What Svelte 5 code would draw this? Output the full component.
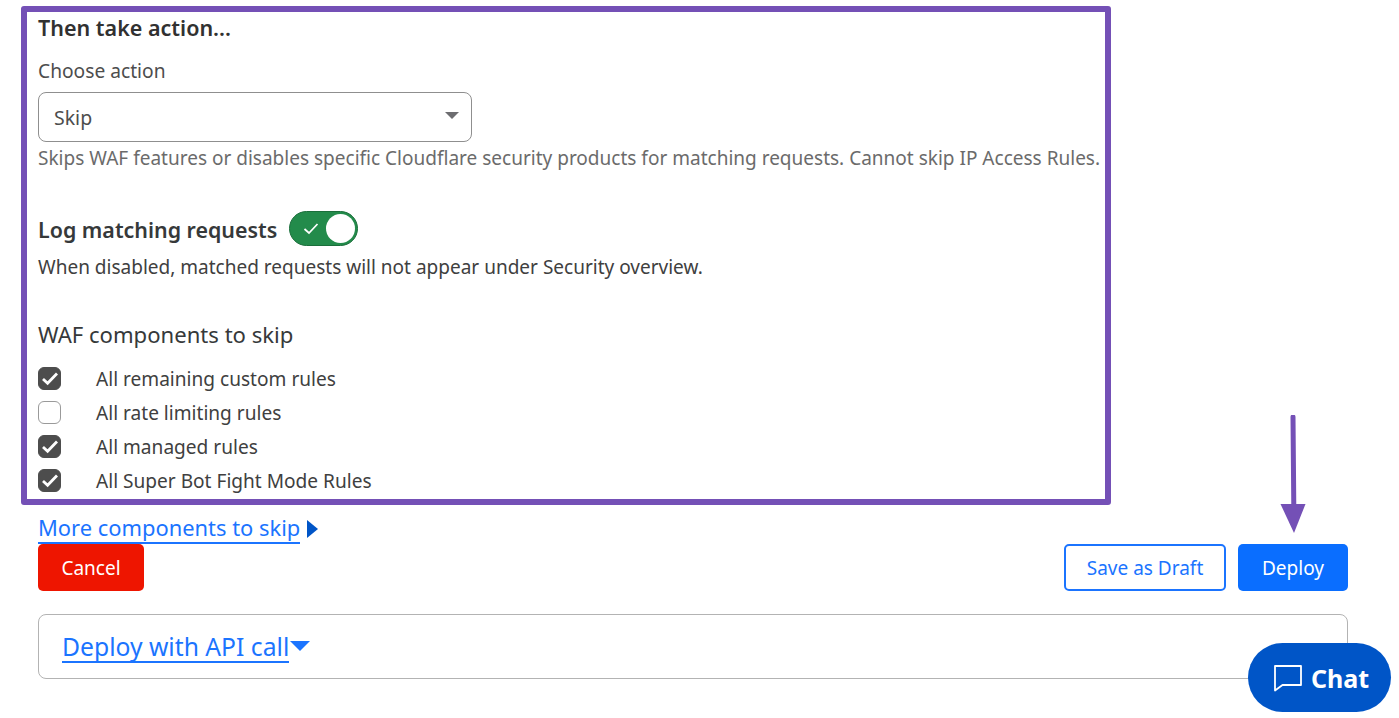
<script>
	const components = [
		{ label: 'All remaining custom rules', checked: true },
		{ label: 'All rate limiting rules', checked: false },
		{ label: 'All managed rules', checked: true },
		{ label: 'All Super Bot Fight Mode Rules', checked: true }
	];
</script>

<div class="page">
	<section class="frame">
		<h2>Then take action...</h2>
		<div class="field-label">Choose action</div>
		<div class="select">
			<span>Skip</span>
			<i class="caret"></i>
		</div>
		<p class="hint">Skips WAF features or disables specific Cloudflare security products for matching requests. Cannot skip IP Access Rules.</p>

		<div class="log-row">
			<span class="log-label">Log matching requests</span>
			<span class="toggle">
				<svg width="18" height="13" viewBox="0 0 18 13"><path d="M2.5 7 L7 11 L15.5 2" fill="none" stroke="#fff" stroke-width="1.7"/></svg>
				<i class="knob"></i>
			</span>
		</div>
		<p class="log-hint">When disabled, matched requests will not appear under Security overview.</p>

		<h3>WAF components to skip</h3>
		<ul class="checks">
			{#each components as c}
				<li>
					<span class="box" class:checked={c.checked}>
						{#if c.checked}
							<svg width="18" height="15" viewBox="0 0 18 15"><path d="M2 8 L6.6 12.2 L16 2.6" fill="none" stroke="#fff" stroke-width="2.8"/></svg>
						{/if}
					</span>
					<span class="check-label">{c.label}</span>
				</li>
			{/each}
		</ul>
	</section>

	<div class="more"><a href="#more">More components to skip</a><i class="tri-right"></i></div>

	<div class="actions">
		<button class="btn cancel">Cancel</button>
		<div class="right">
			<button class="btn draft">Save as Draft</button>
			<button class="btn deploy">Deploy</button>
		</div>
	</div>

	<div class="api-panel">
		<a href="#api">Deploy with API call</a><i class="tri-down"></i>
	</div>

	<svg class="arrow" width="40" height="120" viewBox="0 0 40 120">
		<path d="M20 2 L20.8 92" stroke="#7450b6" stroke-width="5" stroke-linecap="round" fill="none"/>
		<path d="M7.5 89 L32.5 89 L21 118 Z" fill="#7450b6"/>
	</svg>

	<button class="chat">
		<svg width="30" height="28" viewBox="0 0 30 28"><path d="M2 2 H28 V21 H9.5 L2 26.5 Z" fill="none" stroke="#fff" stroke-width="1.8" stroke-linejoin="round"/></svg>
		<span>Chat</span>
	</button>
</div>

<style>
	:global(body) {
		margin: 0;
		background: #fff;
	}

	.page {
		position: relative;
		width: 1399px;
		height: 718px;
		overflow: hidden;
		box-sizing: border-box;
		padding: 6px 51px 0 38px;
		font-family: "Noto Sans", "Open Sans", sans-serif;
		color: #36393a;
	}

	.frame {
		margin-left: -17px;
		width: 1090px;
		height: 499px;
		box-sizing: border-box;
		border: 6px solid #7450b6;
		border-radius: 3px;
		padding: 0 0 0 11px;
	}

	h2 {
		margin: 0;
		height: 32px;
		font-size: 21.5px;
		line-height: 32px;
		font-weight: 600;
		color: #313131;
		white-space: nowrap;
	}

	.field-label {
		margin-top: 13px;
		height: 28px;
		font-size: 19.2px;
		line-height: 28px;
		color: #4d4d4d;
	}

	.select {
		margin-top: 7px;
		width: 434px;
		height: 50px;
		box-sizing: border-box;
		border: 1px solid #8f8f8f;
		border-radius: 8px;
		display: flex;
		align-items: center;
		justify-content: space-between;
		padding: 0 12px 0 15px;
		font-size: 19.5px;
		color: #4d4d4d;
	}

	.caret {
		width: 0;
		height: 0;
		border-left: 7px solid transparent;
		border-right: 7px solid transparent;
		border-top: 7px solid #6d6d70;
		margin-top: -3px;
	}

	.hint {
		margin: 2px 0 0;
		height: 28px;
		font-size: 19.03px;
		line-height: 28px;
		color: #6b6b6b;
		white-space: nowrap;
	}

	.log-row {
		margin-top: 39px;
		height: 35px;
		display: flex;
		align-items: center;
		gap: 12px;
	}

	.log-label {
		padding-top: 2px;
		font-size: 21.4px;
		font-weight: 600;
		color: #36393a;
		white-space: nowrap;
	}

	.toggle {
		width: 69px;
		height: 35px;
		box-sizing: border-box;
		border-radius: 18px;
		background: #238b4b;
		border: 1px solid #1b6f3b;
		display: flex;
		align-items: center;
		justify-content: space-between;
		padding: 0 2px 0 12px;
	}

	.knob {
		width: 29px;
		height: 29px;
		border-radius: 50%;
		background: #fff;
	}

	.log-hint {
		margin: 7px 0 0;
		height: 28px;
		font-size: 19.03px;
		line-height: 28px;
		color: #404040;
		white-space: nowrap;
	}

	h3 {
		margin: 38px 0 0;
		height: 32px;
		font-size: 22.1px;
		line-height: 30px;
		font-weight: 400;
		color: #36393a;
	}

	.checks {
		list-style: none;
		margin: 10px 0 0;
		padding: 0;
	}

	.checks li {
		height: 34px;
		display: flex;
		align-items: center;
		font-size: 19.1px;
		color: #404040;
	}

	.check-label {
		padding-top: 2px;
	}

	.box {
		flex: none;
		width: 23px;
		height: 23px;
		box-sizing: border-box;
		margin-right: 35px;
		border: 1px solid #9a9a9a;
		border-radius: 6px;
		background: #fff;
		display: flex;
		align-items: center;
		justify-content: center;
	}

	.box.checked {
		background: #4d4d4d;
		border-color: #4d4d4d;
	}

	.more {
		margin-top: 8px;
		height: 31px;
		display: flex;
		align-items: center;
		font-size: 21.9px;
		line-height: 31px;
	}

	a {
		color: #1b74ff;
		text-decoration: none;
		border-bottom: 2px solid #1b74ff;
		line-height: 28px;
		white-space: nowrap;
	}

	.tri-right {
		margin-left: 7px;
		width: 0;
		height: 0;
		border-top: 9px solid transparent;
		border-bottom: 9px solid transparent;
		border-left: 11px solid #0055c7;
	}

	.actions {
		height: 47px;
		display: flex;
		justify-content: space-between;
	}

	.right {
		display: flex;
		gap: 12px;
	}

	.btn {
		height: 47px;
		box-sizing: border-box;
		border-radius: 5px;
		font: inherit;
		font-size: 19px;
		padding: 0;
	}

	.cancel {
		width: 106px;
		background: #ee1500;
		border: 0;
		color: #fff;
	}

	.draft {
		width: 162px;
		background: #fff;
		border: 2px solid #1b74ff;
		color: #1b74ff;
	}

	.deploy {
		width: 110px;
		background: #0a6eff;
		border: 0;
		color: #fff;
	}

	.api-panel {
		margin-top: 23px;
		height: 65px;
		box-sizing: border-box;
		border: 1px solid #b3b3b3;
		border-radius: 8px;
		padding: 3px 0 0 23px;
		display: flex;
		align-items: center;
		font-size: 24.7px;
	}

	.tri-down {
		margin-left: 1px;
		width: 0;
		height: 0;
		border-left: 10px solid transparent;
		border-right: 10px solid transparent;
		border-top: 10px solid #1b74ff;
		margin-top: -4px;
	}

	.arrow {
		position: absolute;
		left: 1273px;
		top: 415px;
	}

	.chat {
		position: absolute;
		left: 1248px;
		top: 643px;
		width: 143px;
		height: 69px;
		border: 0;
		border-radius: 35px;
		background: #0055c7;
		color: #fff;
		display: flex;
		align-items: center;
		justify-content: center;
		gap: 8px;
		font: inherit;
		font-size: 25px;
		font-weight: 700;
		padding: 0 0 0 3px;
	}
</style>
